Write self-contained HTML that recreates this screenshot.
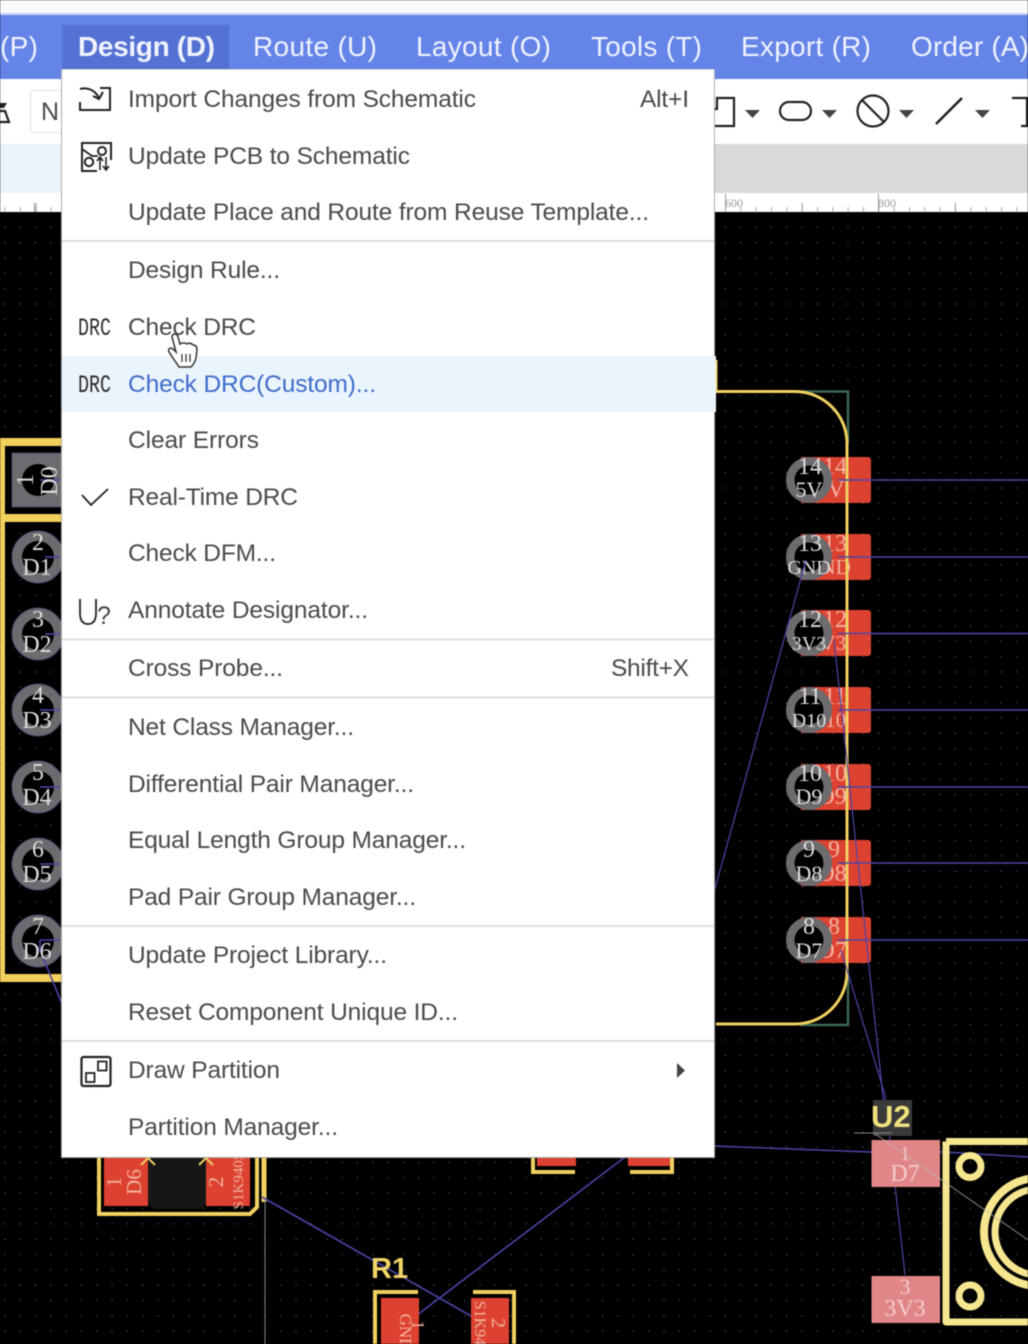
<!DOCTYPE html>
<html lang="en">
<head>
<meta charset="utf-8">
<title>Design menu</title>
<style>
html,body{margin:0;padding:0;background:#000;width:1028px;height:1344px;overflow:hidden}
svg{display:block;filter:blur(.45px)}
text{font-family:"Liberation Sans",sans-serif}
.m text{font-size:24.5px;fill:#4a4a4a}
.b text{font-size:28px;fill:#f0f3fe}
.s{font-family:"Liberation Serif",serif!important;font-size:24px;fill:#dcdcdc;text-anchor:middle}
.p{font-family:"Liberation Serif",serif!important;font-size:24px;fill:#f3b3a3;text-anchor:middle}
.n{stroke:#4d45a8;stroke-width:1.6;fill:none}
</style>
</head>
<body>
<svg width="1028" height="1344" viewBox="0 0 1028 1344" xmlns="http://www.w3.org/2000/svg">
<defs>
<pattern id="dots" x="4" y="12" width="15.33" height="15.33" patternUnits="userSpaceOnUse"><circle cx="0.8" cy="0.8" r="0.7" fill="#5a5a5a"/></pattern>
<pattern id="ticks" x="725" y="207" width="15.33" height="5" patternUnits="userSpaceOnUse"><rect width="1" height="5" fill="#aaa"/></pattern>
<pattern id="ticksB" x="725" y="203" width="76.6" height="9" patternUnits="userSpaceOnUse"><rect width="1" height="9" fill="#999"/></pattern>
<g id="hole"><circle r="26" fill="#6d6b6f" stroke="#4e4670" stroke-width="1"/><circle r="16" fill="#000"/></g>
<rect id="rr" x="800" y="0" width="71" height="46" rx="3" fill="#dd4230"/>
<g id="rc"><circle cx="809" cy="23" r="23" fill="#6d6b6d"/><circle cx="809" cy="23" r="14.500" fill="#000"/></g>
</defs>

<!-- page chrome -->
<rect width="1028" height="1344" fill="#000"/>
<rect width="1028" height="14" fill="#fafafa"/>
<rect y="14" width="1028" height="65" fill="#6584e8"/>
<rect y="13" width="1028" height="2" fill="#c9d4f2"/>
<rect x="62" y="25" width="167" height="45" fill="#5472d3"/>
<rect y="79" width="1028" height="65" fill="#fff"/>
<rect y="144" width="1028" height="49" fill="#d9d9d9"/>
<rect y="144" width="62" height="49" fill="#e9f3fb"/>
<rect y="193" width="1028" height="19" fill="#fff"/>
<rect y="207" width="1028" height="5" fill="url(#ticks)"/>
<rect y="203" width="1028" height="9" fill="url(#ticksB)"/>
<rect x="725" y="194" width="1" height="18" fill="#999"/>
<rect x="878" y="194" width="1" height="18" fill="#999"/>
<rect x="34" y="203" width="1" height="9" fill="#999"/>
<text x="725" y="207" font-size="12" fill="#999" style="font-family:'Liberation Serif',serif">600</text>
<text x="878" y="207" font-size="12" fill="#999" style="font-family:'Liberation Serif',serif">800</text>

<!-- menu bar -->
<g class="b">
<text x="0" y="56" textLength="38">(P)</text>
<text x="78" y="56" textLength="137" style="font-weight:bold">Design (D)</text>
<text x="253" y="56" textLength="124">Route (U)</text>
<text x="416" y="56" textLength="135">Layout (O)</text>
<text x="591" y="56" textLength="111">Tools (T)</text>
<text x="741" y="56" textLength="130">Export (R)</text>
<text x="911" y="56" textLength="118">Order (A)</text>
</g>

<!-- toolbar -->
<g fill="none" stroke="#222" stroke-width="2.2">
<path d="M0 111 H5 L9 122 H0"/>
<path d="M714 126 H734 V98 H717 V109 H714"/>
<rect x="780" y="102" width="31" height="18" rx="9"/>
<circle cx="873" cy="111" r="15.5"/>
<path d="M862 100 L884 122"/>
<path d="M936 124 L962 98" stroke-width="2.6"/>
<path d="M1012 98 H1027 V126 H1021"/>
</g>
<path d="M0 103 H7 L4 108 H0Z" fill="#222"/>
<g fill="#444">
<path d="M745 110 H760 L752.500 118Z"/>
<path d="M822 110 H837 L829.500 118Z"/>
<path d="M899 110 H914 L906.500 118Z"/>
<path d="M975 110 H990 L982.500 118Z"/>
</g>
<rect x="30.500" y="90.500" width="40" height="42" rx="3" fill="#fff" stroke="#e2e2e2"/>
<text x="41" y="120" font-size="25" fill="#4a4a4a">N</text>

<!-- PCB canvas -->
<rect y="212" width="1028" height="1132" fill="url(#dots)"/>

<!-- left connector -->
<g fill="#f2cf5b">
<rect y="438" width="62" height="8"/><rect y="514" width="62" height="8"/><rect y="974" width="62" height="8"/><rect y="438" width="5" height="544"/>
</g>
<rect x="12" y="453" width="50" height="54" fill="#6d6b6f" stroke="#4e4670"/>
<circle cx="38" cy="480" r="16" fill="#000"/>
<use href="#hole" x="38" y="557"/><use href="#hole" x="38" y="634"/><use href="#hole" x="38" y="710"/>
<use href="#hole" x="38" y="787"/><use href="#hole" x="38" y="864"/><use href="#hole" x="38" y="941"/>
<g class="n"><path d="M40 480 H60"/><path d="M45 557 H60"/><path d="M45 634 H60"/><path d="M40 710 H60"/><path d="M40 787 H60"/><path d="M40 864 H60"/><path d="M40 940 H60 M40 940 V950 L62 1004"/></g>
<text class="s" transform="translate(33,480) rotate(-90)">1</text>
<text class="s" transform="translate(57,481) rotate(-90)">D0</text>
<text class="s" x="38" y="550">2</text><text class="s" x="37" y="575">D1</text>
<text class="s" x="38" y="627">3</text><text class="s" x="37" y="652">D2</text>
<text class="s" x="38" y="703">4</text><text class="s" x="37" y="728">D3</text>
<text class="s" x="38" y="780">5</text><text class="s" x="37" y="805">D4</text>
<text class="s" x="38" y="857">6</text><text class="s" x="37" y="882">D5</text>
<text class="s" x="38" y="934">7</text><text class="s" x="37" y="959">D6</text>

<!-- right connector -->
<use href="#rr" y="457"/><use href="#rr" y="534"/><use href="#rr" y="610"/><use href="#rr" y="687"/>
<use href="#rr" y="764"/><use href="#rr" y="840"/><use href="#rr" y="917"/>
<text class="p" x="835" y="474">14</text><text class="p" x="830" y="497">5V</text>
<text class="p" x="835" y="551">13</text><text class="p" x="828" y="574" style="font-size:21px">GND</text>
<text class="p" x="835" y="627">12</text><text class="p" x="828" y="650" style="font-size:21px">3V3</text>
<text class="p" x="835" y="704">11</text><text class="p" x="828" y="727" style="font-size:21px">D10</text>
<text class="p" x="835" y="781">10</text><text class="p" x="832" y="804">D9</text>
<text class="p" x="834" y="857">9</text><text class="p" x="832" y="881">D8</text>
<text class="p" x="834" y="934">8</text><text class="p" x="832" y="958">D7</text>
<use href="#rc" y="457"/><use href="#rc" y="534"/><use href="#rc" y="610"/><use href="#rc" y="687"/>
<use href="#rc" y="764"/><use href="#rc" y="840"/><use href="#rc" y="917"/>
<text class="s" x="810" y="474">14</text><text class="s" x="809" y="497" style="font-size:22px">5V</text>
<text class="s" x="810" y="551">13</text><text class="s" x="809" y="574" style="font-size:20px">GND</text>
<text class="s" x="810" y="627">12</text><text class="s" x="809" y="650" style="font-size:20px">3V3</text>
<text class="s" x="810" y="704">11</text><text class="s" x="809" y="727" style="font-size:20px">D10</text>
<text class="s" x="810" y="781">10</text><text class="s" x="809" y="804" style="font-size:22px">D9</text>
<text class="s" x="809" y="857">9</text><text class="s" x="809" y="881" style="font-size:22px">D8</text>
<text class="s" x="809" y="934">8</text><text class="s" x="809" y="958" style="font-size:22px">D7</text>
<path d="M795 391.500 H848 V443 M800 1025 H848 V972" fill="none" stroke="#3d6a55" stroke-width="2.400"/>
<path d="M716 360 V391.500 H795 A52 52 0 0 1 847 443 V972 A52 52 0 0 1 795 1024 H716" fill="none" stroke="#f0d060" stroke-width="3"/>
<g class="n">
<path d="M838 480 H1028"/><path d="M838 557 H1028"/><path d="M838 633.500 H1028"/><path d="M838 710 H1028"/><path d="M838 787 H1028"/><path d="M838 863 H1028"/><path d="M838 940 H1028"/>
<path d="M806 560 L714 892" stroke-width="1.200"/>
<path d="M834 640 L885 1115" stroke-width="1.200"/>
<path d="M841 950 L885 1095 L905 1275" stroke-width="1.200"/>
<path d="M714 1146 L870 1152 H945 L1028 1157" stroke-width="1.400"/>
</g>

<!-- U2 -->
<rect x="873" y="1100" width="39" height="36" fill="#3a3a3a"/>
<text x="871" y="1127" font-size="31" fill="#efe27c" style="font-weight:bold">U2</text>
<path d="M854 1133 H892" stroke="#888" stroke-width="1"/>
<rect x="871.500" y="1140" width="68.500" height="47" fill="#e08686"/>
<rect x="871.500" y="1276" width="68.500" height="47" fill="#e08686"/>
<text x="905" y="1160" font-size="20" fill="#f5cccc" text-anchor="middle" style="font-family:'Liberation Serif',serif">1</text>
<text x="905" y="1181" font-size="24" fill="#f5cccc" text-anchor="middle" style="font-family:'Liberation Serif',serif">D7</text>
<text x="905" y="1294" font-size="22" fill="#f5cccc" text-anchor="middle" style="font-family:'Liberation Serif',serif">3</text>
<text x="905" y="1316" font-size="24" fill="#f5cccc" text-anchor="middle" style="font-family:'Liberation Serif',serif">3V3</text>
<path d="M946 1141.500 H1028 M946 1141.500 V1322 H1028" fill="none" stroke="#f5e68f" stroke-width="7" stroke-linejoin="round"/>
<circle cx="970" cy="1166.500" r="11" fill="none" stroke="#f5e68f" stroke-width="7"/>
<circle cx="970" cy="1296" r="11" fill="none" stroke="#f5e68f" stroke-width="7"/>
<circle cx="1038" cy="1232" r="54" fill="none" stroke="#f5e68f" stroke-width="8"/>
<circle cx="1038" cy="1232" r="43" fill="none" stroke="#f5e68f" stroke-width="7"/>
<path d="M874 1133 L1028 1240" stroke="#bbb" stroke-width="1" opacity=".7"/>

<!-- bottom left component -->
<rect x="104" y="1150" width="44" height="56" fill="#dd4230"/>
<rect x="206" y="1150" width="44" height="56" fill="#dd4230"/>
<path d="M148 1157 H206 V1203 L202 1209 H153 L148 1203Z" fill="#161616"/>
<path d="M99 1157 V1214 H250 L257 1207 V1157" fill="none" stroke="#f0d060" stroke-width="4"/>
<path d="M264 1157 V1202" stroke="#f0d060" stroke-width="5"/>
<path d="M141 1165 L148 1158 L155 1165 M199 1165 L206 1158 L213 1165" fill="none" stroke="#f0d060" stroke-width="2"/>
<text class="p" transform="translate(121,1182) rotate(-90)" style="font-size:21px">1</text>
<text class="p" transform="translate(141,1182) rotate(-90)" style="font-size:21px">D6</text>
<text class="p" transform="translate(223,1182) rotate(-90)" style="font-size:21px">2</text>
<text class="p" transform="translate(243,1181) rotate(-90)" style="font-size:15px">S1K9405</text>
<path d="M265 1200 V1344" stroke="#888" stroke-width="1"/>
<path class="n" d="M262 1197 L478 1320"/>
<path class="n" d="M625 1157 L404 1325"/>

<!-- bottom center -->
<rect x="537" y="1150" width="39" height="16" fill="#dd4230"/>
<rect x="628" y="1150" width="42" height="16" fill="#dd4230"/>
<path d="M533 1157 V1172 H575 M672 1157 V1172 H630" fill="none" stroke="#f0d060" stroke-width="4"/>

<!-- R1 -->
<text x="371" y="1278" font-size="29" fill="#efd566" style="font-weight:bold">R1</text>
<rect x="381" y="1298" width="38" height="46" fill="#dd4230"/>
<rect x="471" y="1298" width="38" height="46" fill="#dd4230"/>
<path d="M375 1344 V1292 H418 M514 1344 V1292 H473" fill="none" stroke="#f0d060" stroke-width="4"/>
<text class="p" transform="translate(400,1344) rotate(90)" style="font-size:17px" x="-12">GND</text>
<text class="p" transform="translate(412,1325) rotate(90)" style="font-size:18px">1</text>
<text class="p" transform="translate(475,1327) rotate(90)" style="font-size:16px">S1K940</text>
<text class="p" transform="translate(492,1323) rotate(90)" style="font-size:20px">2</text>

<!-- menu -->
<rect x="61" y="69" width="654" height="1089" fill="#aaa"/>
<rect x="62" y="69.500" width="652" height="1087.500" fill="#fff"/>
<rect x="62" y="356" width="654" height="56" fill="#eaf4fc"/>
<g fill="#e0e0e0">
<rect x="62" y="240" width="652" height="2"/><rect x="62" y="638.500" width="652" height="2"/><rect x="62" y="696.500" width="652" height="2"/>
<rect x="62" y="925" width="652" height="2"/><rect x="62" y="1040" width="652" height="2"/>
</g>
<g class="m">
<text x="128" y="107" textLength="348">Import Changes from Schematic</text>
<text x="128" y="164" textLength="282">Update PCB to Schematic</text>
<text x="128" y="220" textLength="521">Update Place and Route from Reuse Template...</text>
<text x="128" y="278" textLength="152">Design Rule...</text>
<text x="128" y="335" textLength="128">Check DRC</text>
<text x="128" y="392" textLength="248" style="fill:#3f6ccb">Check DRC(Custom)...</text>
<text x="128" y="448" textLength="131">Clear Errors</text>
<text x="128" y="505" textLength="170">Real-Time DRC</text>
<text x="128" y="561" textLength="148">Check DFM...</text>
<text x="128" y="618" textLength="240">Annotate Designator...</text>
<text x="128" y="676" textLength="155">Cross Probe...</text>
<text x="128" y="735" textLength="226">Net Class Manager...</text>
<text x="128" y="792" textLength="286">Differential Pair Manager...</text>
<text x="128" y="848" textLength="338">Equal Length Group Manager...</text>
<text x="128" y="905" textLength="288">Pad Pair Group Manager...</text>
<text x="128" y="963" textLength="259">Update Project Library...</text>
<text x="128" y="1020" textLength="330">Reset Component Unique ID...</text>
<text x="128" y="1078" textLength="152">Draw Partition</text>
<text x="128" y="1135" textLength="210">Partition Manager...</text>
<text x="640" y="107" textLength="49">Alt+I</text>
<text x="611" y="676" textLength="78">Shift+X</text>
</g>

<!-- menu icons -->
<g fill="none" stroke="#222" stroke-width="2">
<path d="M80 89 C88 87 95 90 99 98 M93 96 L99 99 L103 92"/>
<path d="M100 88 H110 V110 H80 V102"/>
<path d="M100 143 H82 V171 H97 M111 160 V143 H100" stroke-width="2"/>
<path d="M82 149 L92 156 H98" stroke-width="1.800"/>
<circle cx="102" cy="151" r="4"/>
<circle cx="89" cy="162" r="4.200"/>
<path d="M100 158 V170 M97 161 L100 157 L103 161 M106 157 V170 M103 166 L106 170 L109 166" stroke-width="1.600"/>
<path d="M82 495 L91 505 L108 489" stroke-width="1.800"/>
<path d="M80 599 V613 Q80 624 88 624 Q96 624 96 613 V599" stroke-width="1.800"/>
<rect x="81.500" y="1057" width="29" height="29" rx="2" stroke-width="2.200"/>
<rect x="86" y="1073" width="8.500" height="9" stroke-width="1.800"/>
<rect x="98" y="1061.500" width="8.500" height="9" stroke-width="1.800"/>
</g>
<text x="78" y="335" textLength="33" lengthAdjust="spacingAndGlyphs" font-size="25" fill="#2a2a2a" style="font-family:'Liberation Mono',monospace">DRC</text>
<text x="78" y="392" textLength="33" lengthAdjust="spacingAndGlyphs" font-size="25" fill="#2a2a2a" style="font-family:'Liberation Mono',monospace">DRC</text>
<text x="97" y="624" font-size="25" fill="#444">?</text>
<path d="M677 1063 L685 1070.500 L677 1078Z" fill="#444"/>

<!-- hand cursor -->
<path d="M172 337 C172 333 177 333 178 337 L180 344 C183 342 186 343 187 344 C190 342 192 344 193 345 C196 345 197 347 197 350 L196 358 C195 362 193 365 191 367 L179 367 C176 362 172 357 169 352 C168 349 170 347 173 349 L176 352 Z" fill="#fff" stroke="#333" stroke-width="1.500"/>
<path d="M182 354 V362 M186 354 V362 M190 354 V362" stroke="#333" stroke-width="1.300"/>
</svg>
</body>
</html>
